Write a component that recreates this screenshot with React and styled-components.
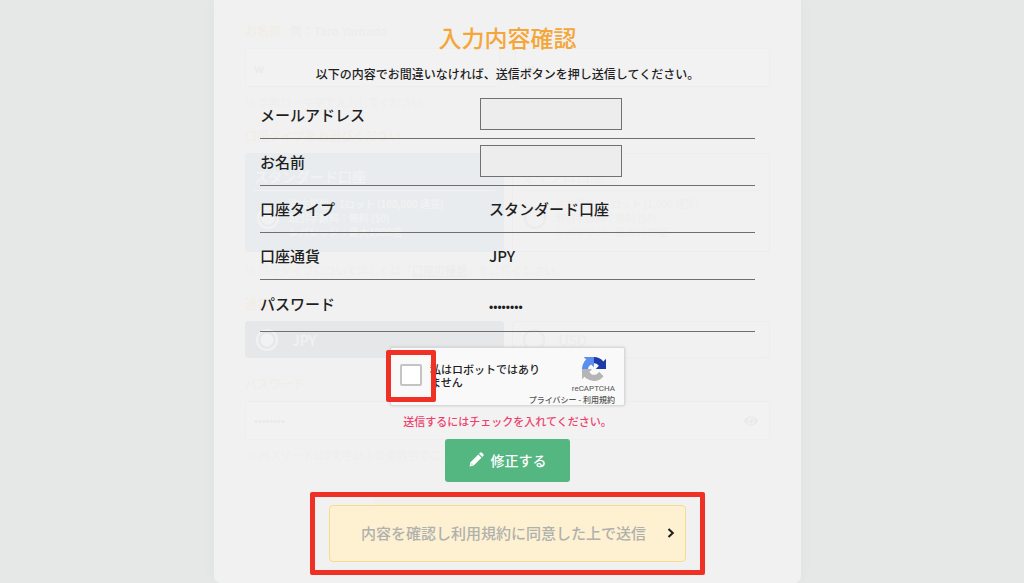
import React from "react";
import styled, { createGlobalStyle, css } from "styled-components";
import { FaEye } from "react-icons/fa";

const colors = {
  page: "#e6e8e8",
  panel: "#f1f1f1",
  text: "#1f1f1f",
  line: "#6f6f6f",
  title: "#f5a638",
  error: "#ee3f6d",
  green: "#54b681",
  marker: "#ee3124",
};

const accounts = [
  {
    id: "standard",
    name: "スタンダード口座",
    specs: ["注文単位：1ロット (100,000 通貨)", "取引手数料：無料 ($0)", "レバレッジ：最大1000倍"],
  },
  {
    id: "micro",
    name: "マイクロ口座",
    specs: ["注文単位：1ロット (1,000 通貨)", "取引手数料：無料 ($0)", "レバレッジ：最大1000倍"],
  },
];

const rows = [
  { label: "メールアドレス", id: "confirmMail", input: true },
  { label: "お名前", id: "confirmName", input: true },
  { label: "口座タイプ", value: "スタンダード口座" },
  { label: "口座通貨", value: "JPY" },
  { label: "パスワード", value: "••••••••", dots: true },
];

const EntryForm = () => (
  <Entry inert aria-hidden="true">
    <FieldLabel htmlFor="firstName">
      お名前 <Example>例：Taro Yamada</Example>
    </FieldLabel>
    <Columns $gap="15px">
      <TextInput id="firstName" defaultValue="w" />
      <TextInput aria-label="姓" defaultValue="w" />
    </Columns>
    <Note>※ 半角ローマ字で入力してください</Note>

    <FieldLabel as="p">口座タイプをお選びください</FieldLabel>
    <Columns $gap="8px">
      {accounts.map((account, i) => (
        <AccountCard key={account.id} $selected={i === 0}>
          <AccountName>{account.name}</AccountName>
          <AccountBody>
            <Radio type="radio" name="account" defaultChecked={i === 0} />
            <span>
              {account.specs.map((spec) => (
                <Spec key={spec}>{spec}</Spec>
              ))}
            </span>
          </AccountBody>
        </AccountCard>
      ))}
    </Columns>
    <Note $wide>
      ※ 口座タイプについて詳しくは「<a href="#types">口座の種類</a>」をご覧ください。
    </Note>

    <FieldLabel as="p">通貨</FieldLabel>
    <Columns $gap="8px">
      <CurrencyCard $selected>
        <Radio type="radio" name="currency" defaultChecked />
        JPY
      </CurrencyCard>
      <CurrencyCard>
        <Radio type="radio" name="currency" />
        USD
      </CurrencyCard>
    </Columns>

    <FieldLabel htmlFor="password">パスワード</FieldLabel>
    <PasswordBox>
      <input id="password" defaultValue="••••••••" />
      <FaEye size={14} />
    </PasswordBox>
    <Note>※ パスワードは8文字以上の英数字でご入力ください</Note>
    <EntrySubmit type="button" />
  </Entry>
);

const RecaptchaLogo = () => (
  <svg width="24" height="24" viewBox="0 0 64 64" aria-hidden="true">
    <path
      fill="#1c3aa9"
      d="M64 31.955a33.3 33.3 0 0 0-.02-1.37V4.687l-7.16 7.16C50.964 4.674 42.05.093 32.067.093c-10.39 0-19.622 4.96-25.458 12.642l11.736 11.86a15.55 15.55 0 0 1 4.754-5.334c2.05-1.6 4.952-2.906 8.968-2.906.485 0 .86.057 1.135.163 4.976.393 9.288 3.14 11.828 7.124l-8.307 8.307 27.277.006"
    />
    <path
      fill="#5b8fef"
      d="M31.862.094a33.3 33.3 0 0 0-1.37.02H4.594l7.16 7.16C4.582 13.13 0 22.044 0 32.028c0 10.39 4.96 19.622 12.642 25.458l11.86-11.736a15.55 15.55 0 0 1-5.334-4.754c-1.6-2.05-2.906-4.952-2.906-8.968 0-.485.057-.86.163-1.135.393-4.976 3.14-9.288 7.124-11.828l8.307 8.307.006-27.277"
    />
    <path
      fill="#b5b5b5"
      d="M.001 32.045c.001.461.012.916.033 1.37v25.898l7.16-7.16c5.857 7.173 14.77 11.754 24.754 11.754 10.39 0 19.622-4.96 25.458-12.642L45.67 39.405a15.55 15.55 0 0 1-4.754 5.334c-2.05 1.6-4.952 2.906-8.968 2.906-.485 0-.86-.057-1.135-.163-4.976-.393-9.288-3.14-11.828-7.124l8.307-8.307-27.277-.006"
    />
  </svg>
);

const PencilIcon = () => (
  <svg width="15" height="15" viewBox="0 0 30 30" fill="#fff" aria-hidden="true">
    <path d="M18.500 5l6.500 6.500L9.500 27 1 29 3 20.500z" />
    <path d="M20 3.500L22 1.500a3 3 0 0 1 4 0L28.500 4a3 3 0 0 1 0 4L26.500 10z" />
    <path d="M5.500 22.500l2 2-3 1z" fill={colors.green} />
  </svg>
);

const Recaptcha = () => (
  <CaptchaBox>
    <CheckSlot>
      <input type="checkbox" id="robot" />
    </CheckSlot>
    <CaptchaLabel htmlFor="robot">私はロボットではありません</CaptchaLabel>
    <CaptchaBrand>
      <RecaptchaLogo />
      <BrandName>reCAPTCHA</BrandName>
      <BrandLinks>
        <a href="#privacy">プライバシー</a> - <a href="#terms">利用規約</a>
      </BrandLinks>
    </CaptchaBrand>
  </CaptchaBox>
);

const App = () => (
  <Page>
    <GlobalStyle />
    <Card>
      <EntryForm />
      <Confirm>
        <Title>入力内容確認</Title>
        <Lead>以下の内容でお間違いなければ、送信ボタンを押し送信してください。</Lead>
        <Rows>
          {rows.map((row) => (
            <Row key={row.label}>
              <RowLabel as={row.input ? "label" : "span"} htmlFor={row.id}>
                {row.label}
              </RowLabel>
              {row.input ? (
                <MaskedInput id={row.id} readOnly />
              ) : (
                <RowValue $dots={row.dots}>{row.value}</RowValue>
              )}
            </Row>
          ))}
        </Rows>
        <Recaptcha />
        <ErrorText>送信するにはチェックを入れてください。</ErrorText>
        <EditButton type="button">
          <PencilIcon />
          修正する
        </EditButton>
        <Marker>
          <SubmitButton type="submit">
            <span>内容を確認し利用規約に同意した上で送信</span>
            <svg width="8" height="10" viewBox="0 0 8 10" aria-hidden="true">
              <path d="M1.500 1l4.300 4-4.300 4" fill="none" stroke="#1f1f1f" strokeWidth="2" />
            </svg>
          </SubmitButton>
        </Marker>
      </Confirm>
    </Card>
  </Page>
);

export default App;

const GlobalStyle = createGlobalStyle`
  * {
    box-sizing: border-box;
  }

  body {
    margin: 0;
    background: ${colors.page};
    color: ${colors.text};
    font-family: "Noto Sans CJK JP", "Noto Sans", sans-serif;
    font-weight: 500;
  }

  p,
  h1 {
    margin: 0;
  }

  input,
  button {
    font-family: inherit;
    font-weight: inherit;
    color: inherit;
  }
`;

const Page = styled.div`
  display: flex;
  justify-content: center;
  padding-right: 9px;
`;

/* the entry form and the confirmation share one cell */
const Card = styled.main`
  display: grid;
  grid-template-columns: minmax(0, 1fr);
  width: 100%;
  max-width: 587px;
  background: ${colors.panel};
  border-radius: 0 0 7px 7px;
  box-shadow: 0 0 16px rgba(0, 0, 0, 0.03);

  > * {
    grid-area: 1 / 1;
  }
`;

const Entry = styled.form`
  padding: 24px 31px 0;
  opacity: 0.08;
  font-size: 12px;
`;

const FieldLabel = styled.label`
  display: block;
  margin-bottom: 10px;
  font-size: 12px;
  line-height: 14px;
  color: #f1c46e;
`;

const Example = styled.span`
  margin-left: 6px;
  color: #b4c0c6;
`;

const Columns = styled.div`
  display: grid;
  grid-template-columns: 1fr 1fr;
  gap: ${({ $gap }) => $gap};

  & + label {
    margin-top: 19px;
  }
`;

const TextInput = styled.input`
  width: 100%;
  height: 39px;
  padding: 0 8px;
  border: 1px solid #d8d8d8;
  border-radius: 4px;
  background: #fff;
  color: #999;
  font-size: 12px;
`;

const Note = styled.p`
  margin: ${({ $wide }) => ($wide ? "11px" : "8px")} 0 20px;
  font-size: 11px;
  line-height: 14px;
  color: #d2d2d2;

  a {
    color: #a9bcc6;
  }
`;

const cardSurface = css`
  border: 1px solid ${({ $selected }) => ($selected ? "transparent" : "#cccccc")};
  border-radius: 4px;
`;

const AccountCard = styled.label`
  ${cardSurface}
  display: block;
  height: 99px;
  padding: 10px 8px;
  background: ${({ $selected }) => ($selected ? "#8dbfe4" : "#f4f4f4")};
  background-clip: border-box;
  color: ${({ $selected }) => ($selected ? "#fff" : "#ccc")};
`;

const AccountName = styled.span`
  display: block;
  padding-bottom: 2px;
  border-bottom: 1px solid currentColor;
  font-size: 14px;
  line-height: 24px;
`;

const AccountBody = styled.span`
  display: flex;
  align-items: center;
  gap: 10px;
  padding: 6px 3px 0;
`;

const Spec = styled.span`
  display: block;
  font-size: 10px;
  line-height: 14px;
`;

const Radio = styled.input`
  appearance: none;
  flex: none;
  width: 22px;
  height: 22px;
  margin: 0;
  border: 2px solid #b0b0b0;
  border-radius: 50%;

  &:checked {
    border-color: #fff;
    background: radial-gradient(circle, #fff 0 6px, transparent 7px);
  }
`;

const CurrencyCard = styled.label`
  ${cardSurface}
  display: flex;
  align-items: center;
  gap: 14px;
  height: 37px;
  padding: 0 10px;
  background: ${({ $selected }) => ($selected ? "#68819a" : "#f4f4f4")};
  color: ${({ $selected }) => ($selected ? "#fff" : "#b8b8b8")};
  font-size: 14px;
`;

const PasswordBox = styled.div`
  display: flex;
  align-items: center;
  height: 39px;
  padding: 0 11px 0 8px;
  border: 1px solid #d8d8d8;
  border-radius: 4px;
  background: #fff;
  color: #999;

  input {
    flex: 1;
    min-width: 0;
    padding: 0;
    border: 0;
    background: none;
    font-family: "Liberation Sans", sans-serif;
    font-size: 11px;
  }
`;

const EntrySubmit = styled.button`
  display: block;
  width: 265px;
  height: 50px;
  margin: 35px auto 0;
  border: 0;
  background: #f6dfae;
`;

const Confirm = styled.form`
  position: relative;
  display: flex;
  flex-direction: column;
  align-items: center;
  padding: 20px 46px 8px;
`;

const Title = styled.h1`
  color: ${colors.title};
  font-size: 23px;
  font-weight: 500;
  line-height: 34px;
`;

const Lead = styled.p`
  margin: 10px 0 8px;
  font-size: 12px;
  line-height: 20px;
`;

const Rows = styled.div`
  width: 100%;
`;

const Row = styled.div`
  display: grid;
  grid-template-columns: 220px minmax(0, 1fr);
  align-items: center;
  height: 47px;
  padding-bottom: 2px;
  border-bottom: 1px solid ${colors.line};
  font-size: 15px;

  &:last-child {
    height: 52px;
    padding-bottom: 4px;
  }
`;

const RowLabel = styled.span`
  color: ${colors.text};
`;

const RowValue = styled.span`
  padding-left: 9px;
  ${({ $dots }) =>
    $dots &&
    css`
      padding-top: 8px;
      font-family: "Liberation Sans", sans-serif;
      font-size: 12px;
    `}
`;

const MaskedInput = styled.input`
  width: 142px;
  height: 32px;
  border: 1px solid #717171;
  border-radius: 0;
  background: #ededed;
`;

const CaptchaBox = styled.div`
  display: flex;
  align-items: center;
  width: 235px;
  height: 59px;
  margin-top: 15px;
  padding: 0 9px;
  border: 1px solid #d9d9d9;
  border-radius: 2px;
  background: #f9f9f9;
  box-shadow: 0 0 3px rgba(0, 0, 0, 0.15);
`;

const CheckSlot = styled.span`
  position: relative;
  flex: none;
  width: 22px;
  height: 22px;
  margin-bottom: 4px;

  input {
    appearance: none;
    display: block;
    width: 22px;
    height: 22px;
    margin: 0;
    border: 2px solid #c4c4c4;
    border-radius: 2px;
    background: #fff;
  }

  &::after {
    content: "";
    position: absolute;
    inset: -14px -14px -16px;
    border: 5px solid ${colors.marker};
    border-radius: 2px;
    pointer-events: none;
  }
`;

const CaptchaLabel = styled.label`
  flex: none;
  width: 120px;
  padding-left: 8px;
  margin: 0 -30px 2px 0;
  font-size: 11px;
  line-height: 13px;
`;

const CaptchaBrand = styled.div`
  display: flex;
  flex: 1;
  flex-direction: column;
  align-items: flex-end;
  padding-top: 8px;
  color: #555;
  font-size: 8px;
  white-space: nowrap;

  svg {
    margin-right: 9px;
  }
`;

const BrandName = styled.span`
  margin-top: 2px;
  font-family: Roboto, sans-serif;
  font-weight: 400;
  line-height: 12px;
`;

const BrandLinks = styled.span`
  line-height: 10px;

  a {
    color: inherit;
    text-decoration: none;
  }
`;

const ErrorText = styled.p`
  margin: 7px 0 10px;
  color: ${colors.error};
  font-size: 11px;
  line-height: 16px;
`;

const EditButton = styled.button`
  display: flex;
  align-items: center;
  justify-content: center;
  gap: 7px;
  width: 125px;
  height: 43px;
  padding: 0 0 2px;
  border: 0;
  border-radius: 3px;
  background: ${colors.green};
  color: #fff;
  font-size: 14px;
`;

const Marker = styled.div`
  width: 100%;
  max-width: 395px;
  margin-top: 10px;
  padding: 8px 14px;
  border: 5px solid ${colors.marker};
  border-radius: 2px;
`;

const SubmitButton = styled.button`
  display: flex;
  align-items: center;
  justify-content: space-between;
  width: 100%;
  height: 57px;
  padding: 0 10px 2px 31px;
  border: 1px solid #f7dc8e;
  border-radius: 4px;
  background: #fdf1d2;
  color: #b0b0ac;
  font-size: 15px;
`;
